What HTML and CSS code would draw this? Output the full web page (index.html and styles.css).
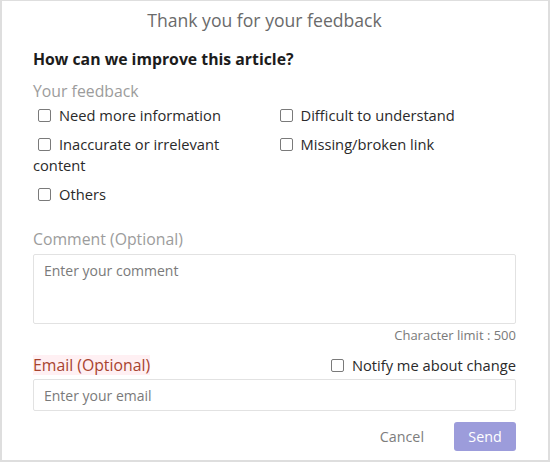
FILE: index.html
```html
<!DOCTYPE html>
<html lang="en">
<head>
<meta charset="utf-8">
<title>Feedback</title>
<link rel="stylesheet" href="styles.css">
</head>
<body>
<div class="dialog">
  <h1 class="title">Thank you for your feedback</h1>
  <h2 class="question">How can we improve this article?</h2>
  <div class="label">Your feedback</div>
  <div class="options">
    <label class="opt"><span class="box"></span>Need more information</label>
    <label class="opt"><span class="box"></span>Difficult to understand</label>
    <label class="opt"><span class="box"></span>Inaccurate or irrelevant content</label>
    <label class="opt"><span class="box"></span>Missing/broken link</label>
    <label class="opt"><span class="box"></span>Others</label>
  </div>
  <div class="label comment-label">Comment (Optional)</div>
  <textarea class="comment" placeholder="Enter your comment"></textarea>
  <div class="limit">Character limit : 500</div>
  <div class="email-row">
    <span class="label email-label">Email (Optional)</span>
    <label class="opt notify"><span class="box"></span>Notify me about change</label>
  </div>
  <input class="email" type="text" placeholder="Enter your email">
  <div class="actions">
    <button class="btn cancel">Cancel</button>
    <button class="btn send">Send</button>
  </div>
</div>
</body>
</html>
```
FILE: styles.css
```css
html, body {
  margin: 0;
  padding: 0;
  background: #dedede;
}
body {
  font-family: "Open Sans", "Noto Sans", sans-serif;
}
.dialog {
  box-sizing: border-box;
  width: 546px;
  height: 459px;
  margin: 1px 2px 2px 2px;
  background: #fff;
  padding: 8px 32px 0 31px;
}
.title {
  margin: 0;
  padding-right: 20px;
  font-size: 17.6px;
  font-weight: 400;
  line-height: 22px;
  color: #6a6a6a;
  text-align: center;
}
.question {
  margin: 18px 0 0;
  font-size: 15.8px;
  font-weight: 700;
  line-height: 20px;
  color: #1c1c1c;
}
.label {
  font-size: 15.8px;
  line-height: 20px;
  color: #9c9c9c;
  margin-top: 12px;
}
.options {
  display: grid;
  grid-template-columns: 1fr 1fr;
  row-gap: 8px;
  margin-top: 4px;
}
.opt {
  font-size: 14.7px;
  line-height: 21px;
  color: #2a2a2a;
  padding-right: 22px;
}
.box {
  display: inline-block;
  box-sizing: border-box;
  width: 13px;
  height: 13px;
  border: 1.5px solid #7a7a7a;
  border-radius: 2px;
  margin: 0 8px 0 5px;
  vertical-align: -1px;
}
.comment-label {
  margin-top: 24px;
}
.comment {
  display: block;
  box-sizing: border-box;
  width: 100%;
  height: 70px;
  margin: 5px 0 0;
  padding: 6px 10px;
  border: 1px solid #e2e2e2;
  border-radius: 2px;
  resize: none;
  font-family: "Open Sans", "Noto Sans", sans-serif;
  font-size: 14px;
  line-height: 20px;
  color: #333;
  outline: none;
}
.comment::placeholder, .email::placeholder {
  color: #7a7a7a;
  opacity: 1;
}
.limit {
  margin-top: 3px;
  font-size: 13px;
  line-height: 16px;
  color: #7a7a7a;
  text-align: right;
}
.email-row {
  display: flex;
  justify-content: space-between;
  align-items: center;
  margin-top: 12px;
}
.email-label {
  margin-top: 0;
  color: #a8432f;
  background: #fff0f3;
}
.notify {
  padding-right: 0;
  line-height: 20px;
}
.email {
  display: block;
  box-sizing: border-box;
  width: 100%;
  height: 32px;
  margin: 4px 0 0;
  padding: 0 10px;
  border: 1px solid #e2e2e2;
  border-radius: 2px;
  font-family: "Open Sans", "Noto Sans", sans-serif;
  font-size: 14px;
  color: #333;
  outline: none;
}
.actions {
  display: flex;
  justify-content: flex-end;
  align-items: center;
  margin-top: 11px;
}
.btn {
  font-family: "Open Sans", "Noto Sans", sans-serif;
  font-size: 14.3px;
  border: none;
  background: none;
  height: 29px;
  padding: 0 30px 0 0;
  cursor: pointer;
}
.cancel {
  color: #7d7d7d;
}
.send {
  width: 62px;
  padding: 0;
  background: #9c9cdb;
  color: #fff;
  border-radius: 3px;
}
```
